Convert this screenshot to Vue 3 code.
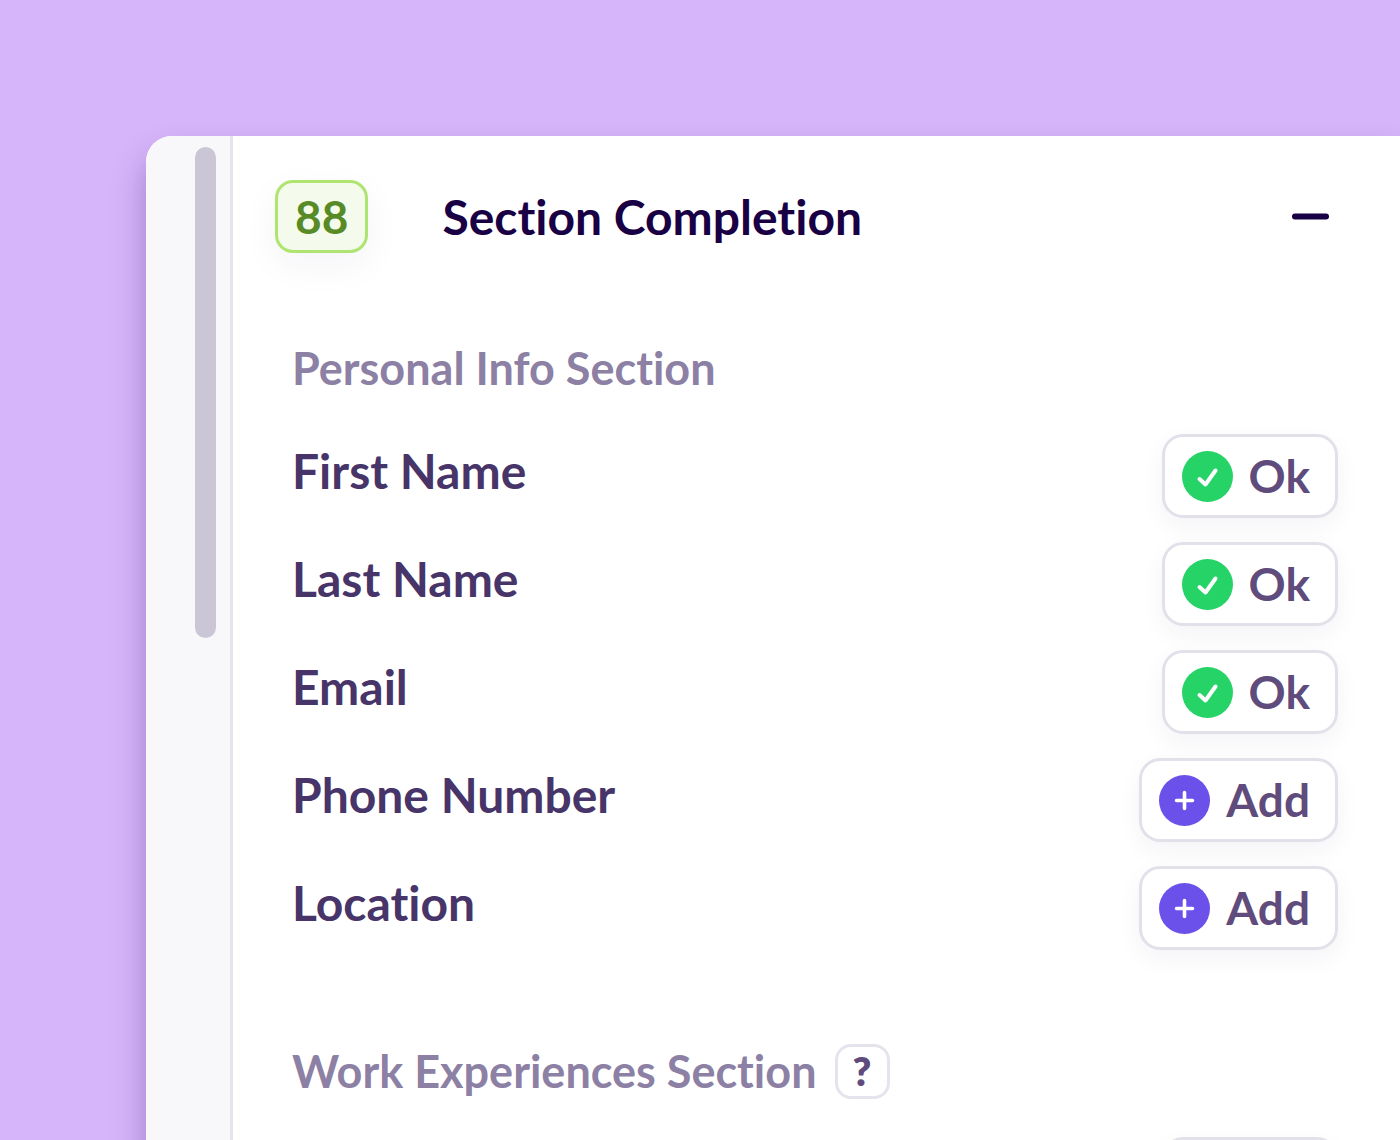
<script setup>
import { ref } from 'vue'

const score = ref(88)
const open = ref(true)

//status: 'ok' (filled in) or 'add' (still missing)
const sections = ref([
    {
        title: 'Personal Info Section',
        help: false,
        fields: [
            { label: 'First Name', status: 'ok' },
            { label: 'Last Name', status: 'ok' },
            { label: 'Email', status: 'ok' },
            { label: 'Phone Number', status: 'add' },
            { label: 'Location', status: 'add' },
        ],
    },
    {
        title: 'Work Experiences Section',
        help: true,
        fields: [{ label: '', status: 'ok' }],
    },
])

//collapse or expand the list
function toggle() {
    open.value = !open.value
}
</script>

<template>
    <div class="page">
        <div class="panel">
            <!--scroll gutter-->
            <aside class="gutter">
                <div class="thumb"></div>
            </aside>

            <main class="content">
                <header class="header">
                    <span class="score">{{ score }}</span>
                    <h1>Section Completion</h1>
                    <button class="toggle" type="button" aria-label="Toggle sections" :aria-expanded="open" @click="toggle">
                        <svg width="38" height="38" viewBox="0 0 38 38">
                            <path d="M3 18.5H34" stroke="#190044" stroke-width="6" stroke-linecap="round" />
                        </svg>
                    </button>
                </header>

                <template v-if="open">
                    <section v-for="section in sections" :key="section.title" class="section">
                        <div class="section-head">
                            <h2>{{ section.title }}</h2>
                            <button v-if="section.help" class="help" type="button">?</button>
                        </div>
                        <ul class="fields">
                            <li v-for="(field, index) in section.fields" :key="index">
                                <span class="label">{{ field.label }}</span>
                                <button class="status" type="button">
                                    <svg v-if="field.status === 'ok'" width="51" height="51" viewBox="0 0 51 51" fill="none">
                                        <circle cx="25.5" cy="25.5" r="25.5" fill="#25d366" />
                                        <path d="M17.5 28L23.5 33.5L33.5 19.5" stroke="#fff" stroke-width="4" stroke-linecap="round" stroke-linejoin="round" />
                                    </svg>
                                    <svg v-else width="51" height="51" viewBox="0 0 51 51" fill="none">
                                        <circle cx="25.5" cy="25.5" r="25.5" fill="#6b50ea" />
                                        <path d="M25.5 17.5V33.5M17.5 25.5H33.5" stroke="#fff" stroke-width="3.6" stroke-linecap="round" />
                                    </svg>
                                    <span>{{ field.status === 'ok' ? 'Ok' : 'Add' }}</span>
                                </button>
                            </li>
                        </ul>
                    </section>
                </template>
            </main>
        </div>
    </div>
</template>

<style>
body {
    margin: 0;
}
</style>

<style scoped>
.page {
    box-sizing: border-box;
    height: 100vh;
    padding: 136px 0 0 146px;
    overflow: hidden;
    background-color: #d6b5fa;
    font-family: Lato, sans-serif;
    font-weight: 700;
    font-variant-ligatures: none;
}

.panel {
    display: flex;
    min-height: 100%;
    border-radius: 26px 0 0 0;
    background-color: #fff;
    box-shadow: 0 20px 32px rgba(60, 20, 110, 0.34);
}

.gutter {
    display: flex;
    justify-content: flex-end;
    width: 70px;
    padding: 11px 14px 0 0;
    border-right: 3px solid #e5e4ed;
    border-radius: 26px 0 0 0;
    background-color: #f8f8fb;
}

.thumb {
    width: 21px;
    height: 491px;
    border-radius: 11px;
    background-color: #cac6d6;
}

.content {
    flex: 1;
    padding: 44px 62px 0 42px;
}

.header {
    display: flex;
    align-items: center;
    height: 73px;
}

.score {
    box-sizing: border-box;
    padding: 0 17px;
    border: 3px solid #aee571;
    border-radius: 18px;
    background-color: #f4faec;
    box-shadow: 0 12px 36px rgba(40, 20, 80, 0.05);
    color: #588a26;
    font-size: 46px;
    line-height: 67px;
}

h1, h2 {
    margin: 0;
    font-weight: 700;
}

h1 {
    flex: 1;
    margin-left: 74px;
    color: #190044;
    font-size: 48px;
    line-height: 60px;
}

button {
    padding: 0;
    border: none;
    background-color: #fff;
    font-family: inherit;
    font-weight: 700;
    cursor: pointer;
}

.toggle {
    display: flex;
    margin-right: 8px;
}

.section {
    padding: 87px 0 6px 17px;
}

.section-head {
    display: flex;
    align-items: center;
    gap: 18px;
    height: 56px;
}

h2 {
    color: #8c80a4;
    font-size: 45px;
    line-height: 56px;
}

.help {
    width: 55px;
    height: 55px;
    border: 3px solid #e5e4ed;
    border-radius: 16px;
    color: #5f4c7d;
    font-size: 40px;
    font-weight: 800;
    line-height: 48px;
}

.fields {
    display: flex;
    flex-direction: column;
    gap: 24px;
    margin: 0;
    padding: 38px 0 0;
    list-style: none;
}

.fields li {
    display: flex;
    align-items: flex-start;
    justify-content: space-between;
}

.label {
    color: #473468;
    font-size: 48px;
    line-height: 74px;
}

.status {
    display: flex;
    align-items: center;
    gap: 16px;
    height: 84px;
    padding: 0 25px 0 17px;
    border: 3px solid #e2e1ea;
    border-radius: 21px;
    box-shadow: 0 9px 24px rgba(40, 20, 80, 0.05);
    color: #5f4c7d;
    font-size: 46px;
    line-height: 60px;
}
</style>
